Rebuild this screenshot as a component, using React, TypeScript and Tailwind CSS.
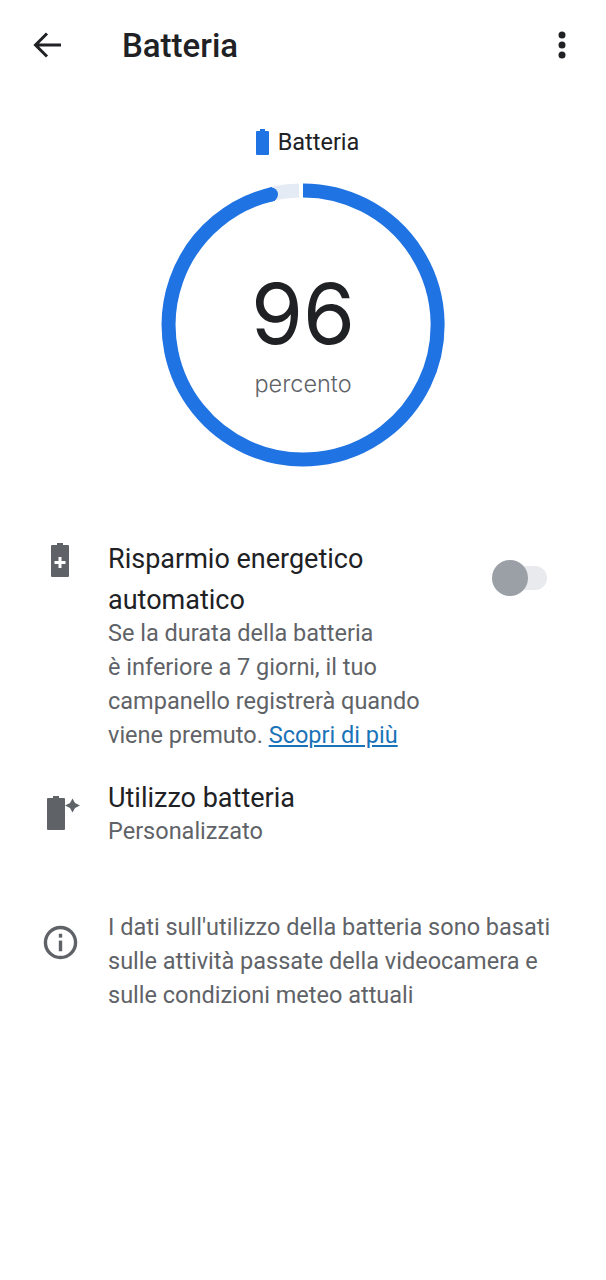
import React from 'react';

const font = { fontFamily: 'Roboto, sans-serif' };

function Gauge() {
  // ring centre 303,325 in the page, radius 134
  return (
    <svg viewBox="0 0 284 284" className="block w-[284px] h-[284px]">
      <path d="M138 7.560A134.500 134.500 0 0 0 110 11" fill="none" stroke="#e4ebf5" strokeWidth="14" />
      <path
        d="M142 7.500A134.500 134.500 0 1 1 112.500 10.800"
        fill="none"
        stroke="#1f73e3"
        strokeWidth="14"
      />
      <circle cx="110" cy="11.500" r="7" fill="#1f73e3" />
    </svg>
  );
}

function App() {
  return (
    <div className="w-[606px] h-[1280px] bg-white overflow-hidden text-[#202124]" style={font}>
      <header className="flex items-center h-[88px] pl-[32px] pr-[40px] pt-[2px]">
        <svg viewBox="0 0 30 30" className="w-[30px] h-[30px] shrink-0" fill="none" stroke="#202124" strokeWidth="3">
          <path d="M29 15H4M15 3.500 3.500 15 15 26.500" />
        </svg>
        <h1 className="ml-[60px] flex-1 text-[33px] leading-none font-medium">Batteria</h1>
        <svg viewBox="0 0 8 28" className="w-2 h-7 shrink-0" fill="#202124">
          <circle cx="4" cy="4" r="3.500" />
          <circle cx="4" cy="14" r="3.500" />
          <circle cx="4" cy="24" r="3.500" />
        </svg>
      </header>

      <div className="flex flex-col items-center mt-[39px]">
        <div className="flex items-center gap-[9px] h-[30px] ml-[9px]">
          <svg viewBox="0 0 13 26" className="w-[13px] h-[26px]" fill="#1f73e3">
            <path d="M4 0h5v2h3a1 1 0 0 1 1 1v22a1 1 0 0 1-1 1H1a1 1 0 0 1-1-1V3a1 1 0 0 1 1-1h3z" />
          </svg>
          <span className="mt-px text-[23.500px] leading-none">Batteria</span>
        </div>
        <div className="relative mt-[26px] w-[284px] h-[284px]">
          <Gauge />
          <div className="absolute inset-0 flex flex-col items-center" style={{ fontFamily: 'Inter, sans-serif' }}>
            <span className="mt-[79px] text-[84px] leading-[104px] font-normal">96</span>
            <span className="mt-[4px] text-[23.500px] leading-7 font-light text-[#5f6368]">percento</span>
          </div>
        </div>
      </div>

      <section className="mt-[71px] flex pl-[48px] pr-[59px]">
        <div className="w-[60px] shrink-0 pt-[5px]">
          <svg viewBox="0 0 18 34" className="w-[18px] h-[34px] ml-[3px]" fill="#5f6368">
            <path fillRule="evenodd" d="M6 0h6v2h5a1 1 0 0 1 1 1v30a1 1 0 0 1-1 1H1a1 1 0 0 1-1-1V3a1 1 0 0 1 1-1h5zM7.500 14v4h-4v3h4v4h3v-4h4v-3h-4v-4z" />
          </svg>
        </div>
        <div className="w-[330px] pt-px">
          <p className="text-[27px] leading-[41px]">Risparmio energetico automatico</p>
          <p className="-mt-[5px] text-[23.500px] leading-[34px] text-[#5f6368]">
            Se la durata della batteria<br />
            è inferiore a 7 giorni, il tuo<br />
            campanello registrerà quando<br />
            viene premuto. <span className="text-[#1a73b8] underline">Scopri di più</span>
          </p>
        </div>
        <div className="ml-auto relative w-[55px] h-[36px] mt-[22px]">
          <div className="absolute right-0 top-[6px] w-[40px] h-[24px] rounded-full bg-[#e8eaed]" />
          <div className="absolute left-0 top-0 w-[36px] h-[36px] rounded-full bg-[#9aa0a6]" />
        </div>
      </section>

      <section className="mt-[26px] flex pl-[47px]">
        <div className="w-[61px] shrink-0 pt-[18px]">
          <svg viewBox="0 0 34 34" className="w-[34px] h-[34px]" fill="#5f6368">
            <path d="M6 0h6v2h5a1 1 0 0 1 1 1v30a1 1 0 0 1-1 1H1a1 1 0 0 1-1-1V3a1 1 0 0 1 1-1h5z" />
            <path d="M25.500 2.500 28 7l5 2.500-5 2.500-2.500 4.500L23 12l-5-2.500L23 7z" />
          </svg>
        </div>
        <div>
          <p className="text-[27px] leading-[41px]">Utilizzo batteria</p>
          <p className="-mt-[2px] text-[23.500px] leading-[28px] text-[#5f6368]">Personalizzato</p>
        </div>
      </section>

      <section className="mt-[65px] flex pl-[43px]">
        <div className="w-[65px] shrink-0 pt-[15px]">
          <svg viewBox="0 0 36 36" className="w-[35px] h-[35px]" fill="none" stroke="#5f6368" strokeWidth="3.500">
            <circle cx="18" cy="18" r="15.500" />
            <path d="M18 16v11" />
            <path d="M18 9v4" />
          </svg>
        </div>
        <p className="text-[23.500px] leading-[34px] text-[#5f6368]">
          I dati sull'utilizzo della batteria sono basati<br />
          sulle attività passate della videocamera e<br />
          sulle condizioni meteo attuali
        </p>
      </section>
    </div>
  );
}

export default App;
